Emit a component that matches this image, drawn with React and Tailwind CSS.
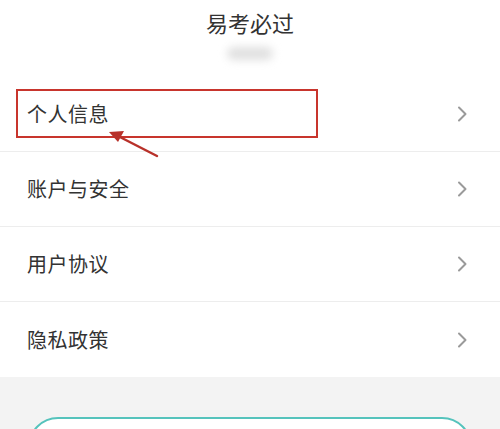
import React from "react";

const rows = ["个人信息", "账户与安全", "用户协议", "隐私政策"];

function Chevron() {
  return (
    <svg width="12" height="18" viewBox="0 0 12 18" className="mr-[32px]">
      <path d="M3 2.5 L9.5 9 L3 15.5" fill="none" stroke="#9a9a9a" strokeWidth="2" strokeLinecap="round" strokeLinejoin="round" />
    </svg>
  );
}

export default function App() {
  return (
    <div
      className="relative w-[500px] h-[429px] overflow-hidden bg-white flex flex-col"
      style={{ fontFamily: '"Noto Sans CJK SC", "Noto Sans", sans-serif' }}
    >
      <div className="h-[77px] shrink-0 flex flex-col items-center">
        <div className="mt-[6px] text-[22px] leading-[32px] text-[#333333]">易考必过</div>
        <div className="mt-[9px] w-[46px] h-[13px] rounded-full bg-[#e0e0e0] blur-[4px]" />
      </div>
      {rows.map((r, i) => (
        <div
          key={r}
          className={
            "h-[75px] shrink-0 flex items-center justify-between " +
            (i < 3 ? "border-b border-[#ededed]" : "")
          }
        >
          <span className="ml-[27px] text-[20px] leading-[28px] text-[#333333] tracking-[0.5px]">{r}</span>
          <Chevron />
        </div>
      ))}
      <div className="flex-1 bg-[#f3f3f3] pt-[40px]">
        <div className="mx-[28px] h-[60px] rounded-[32px] border-2 border-[#55c3bc] bg-white" />
      </div>

      <div className="absolute left-[16px] top-[89px] w-[302px] h-[49px] border-2 border-[#c8352d]" />
      <svg className="absolute left-0 top-0" width="500" height="429" viewBox="0 0 500 429">
        <line x1="157" y1="156" x2="116" y2="135" stroke="#b8312a" strokeWidth="2.5" strokeLinecap="round" />
        <path d="M109 132 L124 131 L118 142 Z" fill="#b8312a" />
      </svg>
    </div>
  );
}
